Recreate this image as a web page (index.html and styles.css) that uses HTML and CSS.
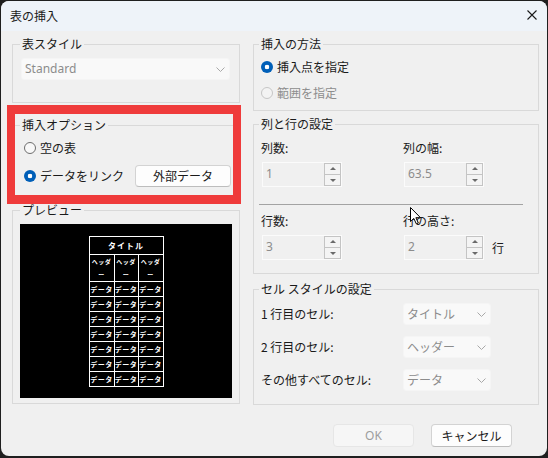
FILE: index.html
```html
<!DOCTYPE html>
<html lang="ja">
<head>
<meta charset="utf-8">
<title>表の挿入</title>
<link rel="stylesheet" href="styles.css">
</head>
<body>
<div class="window">
  <div class="titlebar">
    <span class="title">表の挿入</span>
    <svg class="close" width="10" height="10" viewBox="0 0 10 10"><path d="M0.5 0.5 L9.5 9.5 M9.5 0.5 L0.5 9.5" stroke="#1a1a1a" stroke-width="1.1" fill="none"/></svg>
  </div>
  <div class="content">
    <div class="columns">
      <div class="col col-left">
        <fieldset class="group g-style">
          <legend>表スタイル</legend>
          <div class="select sel-wide"><span>Standard</span><svg class="chev" width="9" height="5" viewBox="0 0 9 5"><polyline points="0.5,0.5 4.5,4.5 8.5,0.5" fill="none" stroke="#a8a8a8" stroke-width="1"/></svg></div>
        </fieldset>
        <fieldset class="group g-opt">
          <legend>挿入オプション</legend>
          <div class="radio-row opt1"><span class="radio"></span><span>空の表</span></div>
          <div class="radio-row opt2"><span class="radio on"></span><span>データをリンク</span><button class="btn btn-ext">外部データ</button></div>
        </fieldset>
        <fieldset class="group g-prev">
          <legend>プレビュー</legend>
          <div class="preview">
            <div class="ptable">
              <div class="pc pt">タイトル</div>
              <div class="pc ph">ヘッダ<br>ー</div><div class="pc ph">ヘッダ<br>ー</div><div class="pc ph">ヘッダ<br>ー</div>
              <div class="pc">データ</div><div class="pc">データ</div><div class="pc">データ</div>
              <div class="pc">データ</div><div class="pc">データ</div><div class="pc">データ</div>
              <div class="pc">データ</div><div class="pc">データ</div><div class="pc">データ</div>
              <div class="pc">データ</div><div class="pc">データ</div><div class="pc">データ</div>
              <div class="pc">データ</div><div class="pc">データ</div><div class="pc">データ</div>
              <div class="pc">データ</div><div class="pc">データ</div><div class="pc">データ</div>
              <div class="pc">データ</div><div class="pc">データ</div><div class="pc">データ</div>
            </div>
          </div>
        </fieldset>
      </div>
      <div class="col col-right">
        <fieldset class="group g-method">
          <legend>挿入の方法</legend>
          <div class="radio-row m1"><span class="radio on"></span><span>挿入点を指定</span></div>
          <div class="radio-row m2 disabled"><span class="radio dis"></span><span>範囲を指定</span></div>
        </fieldset>
        <fieldset class="group g-rowcol">
          <legend>列と行の設定</legend>
          <div class="rc-grid rc1">
            <div class="lbl">列数:</div>
            <div class="lbl">列の幅:</div>
            <div class="spin"><span class="val">1</span><span class="btns"><span class="up"></span><span class="down"></span></span></div>
            <div class="spin"><span class="val">63.5</span><span class="btns"><span class="up"></span><span class="down"></span></span></div>
          </div>
          <div class="sep"></div>
          <div class="rc-grid rc2">
            <div class="lbl">行数:</div>
            <div class="lbl">行の高さ:</div>
            <div class="spin"><span class="val">3</span><span class="btns"><span class="up"></span><span class="down"></span></span></div>
            <div class="spin-line"><div class="spin"><span class="val">2</span><span class="btns"><span class="up"></span><span class="down"></span></span></div><span class="unit">行</span></div>
          </div>
        </fieldset>
        <fieldset class="group g-cell">
          <legend>セル スタイルの設定</legend>
          <div class="cell-grid">
            <div class="lbl">1 行目のセル:</div>
            <div class="select sel-cell"><span>タイトル</span><svg class="chev" width="9" height="5" viewBox="0 0 9 5"><polyline points="0.5,0.5 4.5,4.5 8.5,0.5" fill="none" stroke="#a8a8a8" stroke-width="1"/></svg></div>
            <div class="lbl">2 行目のセル:</div>
            <div class="select sel-cell"><span>ヘッダー</span><svg class="chev" width="9" height="5" viewBox="0 0 9 5"><polyline points="0.5,0.5 4.5,4.5 8.5,0.5" fill="none" stroke="#a8a8a8" stroke-width="1"/></svg></div>
            <div class="lbl">その他すべてのセル:</div>
            <div class="select sel-cell"><span>データ</span><svg class="chev" width="9" height="5" viewBox="0 0 9 5"><polyline points="0.5,0.5 4.5,4.5 8.5,0.5" fill="none" stroke="#a8a8a8" stroke-width="1"/></svg></div>
          </div>
        </fieldset>
      </div>
    </div>
    <div class="footer">
      <button class="btn btn-ok" disabled>OK</button>
      <button class="btn btn-cancel">キャンセル</button>
    </div>
  </div>
  <div class="redbox"></div>
  <svg class="cursor" width="13" height="18" viewBox="0 0 13 18"><path d="M0.5 0.5 L0.5 14.5 L3.8 11.4 L6.3 16.8 L8.3 15.9 L5.9 10.7 L10.5 10.7 Z" fill="#fff" stroke="#000" stroke-width="1" stroke-linejoin="miter"/></svg>
</div>
</body>
</html>
```

FILE: styles.css
```css
* { box-sizing: border-box; }
html, body { margin: 0; padding: 0; }
body {
  width: 548px;
  height: 458px;
  overflow: hidden;
  background: #1f1f1f;
  font-family: "Noto Sans CJK JP", "Noto Sans", sans-serif;
  font-size: 12px;
  color: #1a1a1a;
}
.window {
  position: relative;
  margin: 1px 0 0 1px;
  width: 546px;
  height: 455px;
  background: #f0f0f0;
  border-radius: 8px;
  overflow: hidden;
}
.titlebar {
  height: 30px;
  background: #eef3f9;
  display: flex;
  align-items: center;
  justify-content: space-between;
  padding: 0 10px 0 9px;
}
.title { line-height: 30px; }
.close { display: block; margin-bottom: 2px; }

.content { padding: 5px 0 0 11px; }
.columns { display: flex; gap: 13px; height: 369px; }
.col { display: flex; flex-direction: column; }
.col-left { width: 228px; }
.col-right { width: 286px; }

.group {
  margin: 0;
  padding: 0;
  border: 1px solid #d9d9d9;
  min-width: 0;
}
.group legend {
  font-size: 12px;
  line-height: 16px;
  padding: 0 2px;
}
.col-left .group legend { margin-left: 7px; }
.col-right .group legend { margin-left: 5px; }

.g-style { height: 67px; }
.g-opt { height: 80px; margin-top: 14px; }
.g-prev { height: 202px; margin-top: 5px; }
.g-method { height: 75px; }
.g-rowcol { height: 158px; margin-top: 5px; }
.g-cell { height: 124px; margin-top: 7px; }

/* selects */
.select {
  display: flex;
  align-items: center;
  justify-content: space-between;
  height: 22px;
  background: #f9f9f9;
  border: 1px solid #f5f5f5;
  border-radius: 3px;
  padding: 0 4px 0 3px;
  color: #8c8c8c;
  line-height: 20px;
}
.chev { display: block; margin-top: 1px; }
.sel-wide { width: 209px; margin: 6px 0 0 8px; font-family: "Noto Sans", "Noto Sans CJK JP", sans-serif; }
.sel-cell { width: 88px; }

/* radios */
.radio-row { display: flex; align-items: center; height: 20px; line-height: 20px; }
.radio {
  flex: none;
  width: 12px;
  height: 12px;
  border-radius: 50%;
  border: 1px solid #6e6e6e;
  background: #f8f8f8;
  margin-right: 4px;
}
.radio.on {
  border: none;
  background: radial-gradient(circle, #ffffff 0 2px, #005fb8 2.6px);
}
.radio.dis { border-color: #c6c6c6; background: #f3f3f3; }
.disabled { color: #8d8d8d; }

.opt1 { margin: 5px 0 0 11px; }
.opt2 { margin: 7px 0 0 11px; height: 22px; }
.m1 { margin: 5px 0 0 7px; }
.m2 { margin: 6px 0 0 7px; }

/* buttons */
.btn {
  font: inherit;
  font-size: 12px;
  color: #1a1a1a;
  background: #fdfdfd;
  border: 1px solid #d3d3d3;
  border-bottom-color: #bdbdbd;
  border-radius: 4px;
  padding: 0;
  line-height: 20px;
}
.btn-ext { width: 96px; height: 22px; margin: 0 8px 0 auto; }
.btn-ok {
  width: 81px;
  height: 23px;
  background: #f6f6f6;
  border: 1px solid #e6e6e6;
  color: #9d9d9d;
  font-family: "Noto Sans", "Noto Sans CJK JP", sans-serif;
}
.btn-cancel { width: 81px; height: 23px; }

/* preview */
.preview {
  width: 212px;
  height: 174px;
  margin: 6px 0 0 7px;
  background: #000;
  padding-top: 12px;
}
.ptable {
  width: 75px;
  height: 151px;
  margin: 0 auto;
  background: #fff;
  padding: 1px;
  display: grid;
  grid-template-columns: 24px 23px 24px;
  grid-template-rows: 17px 26px repeat(7, 14px);
  gap: 1px;
}
.pc {
  background: #000;
  color: #fff;
  font-size: 7px;
  font-weight: bold;
  letter-spacing: 0.5px;
  display: flex;
  align-items: center;
  justify-content: center;
  text-align: center;
  line-height: 1;
  overflow: hidden;
  white-space: nowrap;
}
.pt { grid-column: 1 / 4; font-size: 8px; letter-spacing: 1px; }
.ph { font-size: 6px; line-height: 13px; letter-spacing: 0.5px; }

/* rows & columns */
.rc-grid {
  display: grid;
  grid-template-columns: 142px 1fr;
  grid-template-rows: 16px 25px;
  row-gap: 6px;
  padding-left: 7px;
}
.rc1 { margin-top: 8px; }
.rc2 { margin-top: 8px; }
.lbl { line-height: 16px; white-space: nowrap; }
.spin {
  display: flex;
  width: 80px;
  height: 25px;
  margin-left: 1px;
  border: 1px solid #fbfbfb;
  background: #f0f0f0;
}
.spin .val {
  flex: 1;
  padding: 2px 0 0 3px;
  color: #8c8c8c;
  line-height: 18px;
  font-family: "Noto Sans", "Noto Sans CJK JP", sans-serif;
}
.spin .btns { width: 17px; display: flex; flex-direction: column; }
.spin .btns span {
  flex: 1;
  position: relative;
  background: #f4f4f4;
  border: 1px solid #c4c4c4;
}
.spin .btns .down { border-top: none; }
.spin .btns span::after {
  content: "";
  position: absolute;
  left: 50%;
  top: 50%;
  margin-left: -3px;
  border-left: 3px solid transparent;
  border-right: 3px solid transparent;
}
.spin .btns .up::after { margin-top: -2px; border-bottom: 3px solid #6a6a6a; }
.spin .btns .down::after { margin-top: -1px; border-top: 3px solid #6a6a6a; }
.spin-line { display: flex; align-items: center; }
.unit { margin-left: 8px; }
.sep {
  width: 264px;
  height: 1px;
  margin: 17px 0 0 5px;
  background: #a3a3a3;
}

/* cell styles */
.cell-grid {
  display: grid;
  grid-template-columns: 142px 88px;
  grid-auto-rows: 22px;
  row-gap: 11px;
  padding-left: 7px;
  margin-top: 6px;
  align-items: center;
}
.cell-grid .lbl { line-height: 22px; }

.footer {
  display: flex;
  justify-content: flex-end;
  gap: 17px;
  padding-right: 35px;
  margin-top: 19px;
}

/* overlays */
.redbox {
  position: absolute;
  left: 6px;
  top: 104px;
  width: 234px;
  height: 99px;
  border-style: solid;
  border-color: #ef3b3b;
  border-width: 9px 8px;
}
.cursor {
  position: absolute;
  left: 409px;
  top: 206px;
  display: block;
}
```
